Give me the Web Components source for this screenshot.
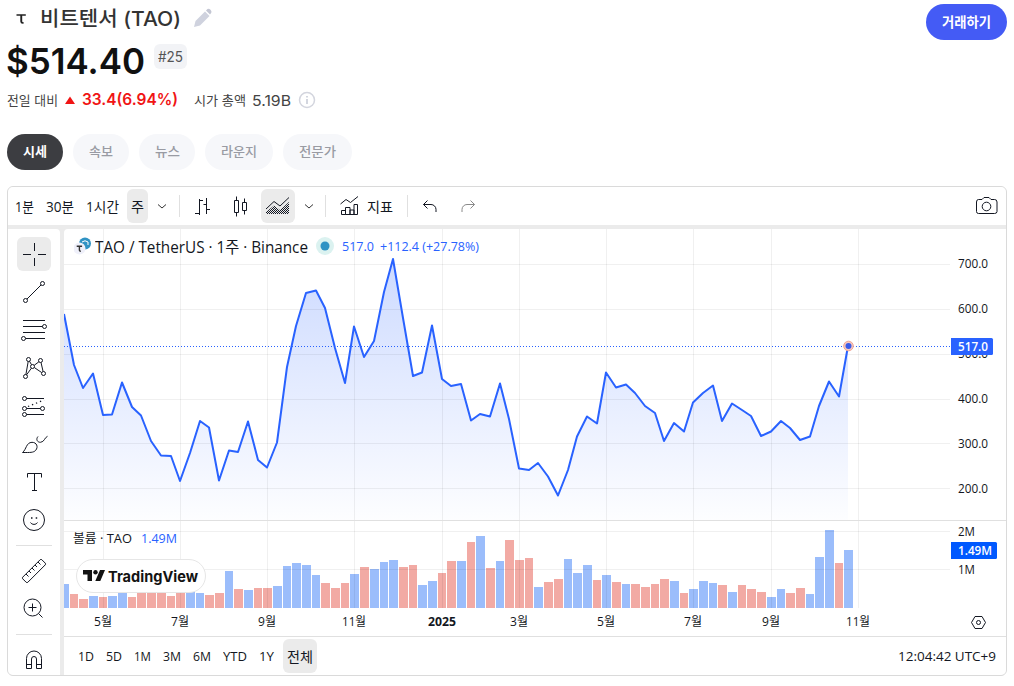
<!DOCTYPE html>
<html lang="ko">
<head>
<meta charset="utf-8">
<title>비트텐서 (TAO)</title>
<style>
    body {
        margin: 0;
        background: #fff;
        overflow: hidden;
        font-family: Inter, "Noto Sans CJK KR", sans-serif;
        color: #333;
    }
</style>
</head>
<body>
<coin-page></coin-page>

<script>
// text squeezed or stretched to the width given in "w"
class FitText extends HTMLElement {

    constructor() {
        super();
        this.shadow = this.attachShadow({mode: 'open'});
    }

    connectedCallback() {
        this.shadow.innerHTML =
        `
        <style>
            :host{
                display:block;
                flex:none;
                width:${this.getAttribute('w')}px;
                white-space:nowrap;
            }
            span{
                display:inline-block;
                transform-origin:0 50%;
            }
        </style>
        <span><slot></slot></span>
        `;
        const span = this.shadow.querySelector('span');
        const real = span.getBoundingClientRect().width;
        if (real > 0) {
            span.style.transform = `scaleX(${this.getAttribute('w') / real})`;
        }
    }
}

const ICONS = {
    cross: '<path d="M3 14.5h8M18 14.5h8M14.5 3v8M14.5 18v8"/>',
    trend: '<path d="M7 21L21 7"/><circle cx="5.5" cy="22.5" r="2"/><circle cx="22.5" cy="5.5" r="2"/>',
    fib: '<path d="M3 4.5h22M3 10.5h19.5M3 16.5h22M5.5 22.5H25"/><circle cx="24.5" cy="10.5" r="2"/><circle cx="3.5" cy="22.5" r="2"/>',
    pattern: '<path d="M5.9 20.5L8.2 7.5M9.5 7.2l2 3.5M14.2 11.3l4.7-3.5M21 8.5l2.1 9M14.4 13.6l7.2 4.9M11.4 14.2l-4.8 6.6"/><circle cx="8.5" cy="5.5" r="2"/><circle cx="20.5" cy="6.5" r="2"/><circle cx="12.5" cy="12.5" r="2"/><circle cx="5.5" cy="22.5" r="2"/><circle cx="23.5" cy="19.5" r="2"/>',
    forecast: '<path d="M6.5 6.5H24M6.5 16.5h14M6.5 22.5H24"/><path d="M8 14.5L24 8" stroke-width="1.3" stroke-dasharray="1.3 3"/><circle cx="4.5" cy="6.5" r="2"/><circle cx="4.5" cy="16.5" r="2"/><circle cx="22.5" cy="16.5" r="2"/><circle cx="4.5" cy="22.5" r="2"/>',
    brush: '<path d="M2.5 22.5C6.5 19.5 6 12.5 12 12.3C16.8 12.3 18.5 17 15.7 20.3C13.5 22.8 10 22.5 2.5 22.5z"/><path d="M27.5 6.3C24.5 7.5 24.5 12 20.5 12.3C17.5 12.4 15.5 9.5 18 6.5"/>',
    text: '<path d="M7.5 9.5v-4h14v4M14.5 5.5v17M12 22.5h5"/>',
    smile: '<circle cx="14" cy="14" r="10.5"/><path d="M10.5 16.5c1.5 2.5 5.5 2.5 7 0"/><path d="M11 12h1.5M15.7 12h1.5" stroke-width="1.6"/>',
    ruler: '<path d="M2.7 20.2L20.2 2.7q.8-.7 1.6 0l3.5 3.5q.7.8 0 1.6L7.8 25.3q-.8.7-1.6 0l-3.5-3.5q-.7-.8 0-1.6zM6 17l2.5 2.5M9 14l2 2M12 11l2.5 2.5M15 8l2 2M18 5l2.5 2.5"/>',
    zoom: '<circle cx="12.5" cy="12.5" r="8.5"/><path d="M18.5 18.5l4 4M8.5 12.5h8M12.5 8.5v8"/>',
    magnet: '<path d="M6.5 22.5V12.5a7.5 7.5 0 0 1 15 0v10h-5V13a2.5 2.5 0 0 0-5 0v9.5zM6.5 18.5h5M16.5 18.5h5"/>',
    chevron: '<path d="M10 12.5l4 3.5 4-3.5" stroke="#333"/>',
    bars: '<path d="M11.5 7v16M7 21.5h4.5M11.5 8.5H15M18.5 6v16M15.5 12.5h3M18.5 17.5H22"/>',
    candles: '<path d="M8.5 8.5h4v12h-4zM10.5 4.5v4M10.5 20.5v4M16.5 10.5h4v8h-4zM18.5 6.5v4M18.5 18.5v4"/>',
    area: '<defs><pattern id="h" width="2" height="2" patternUnits="userSpaceOnUse"><path d="M0 0h1v1H0zM1 1h1v1H1z" fill="#131722" stroke="none"/></pattern></defs><path d="M2 22v-2l8-6.5 6 4.5 9-8v12z" fill="url(#h)" stroke="none"/><path d="M2 17l8-7.5 6 4.5 9-8.5"/>',
    indicator: '<path d="M5.5 12l5.5-4.5 4.5 3L23 4.5M6.5 22.5v-4h4v4zM10.5 22.5v-7h4.5v7zM15 22.5V18h4v4.5zM19 22.5v-10h3.5v10z"/>',
    undo: '<path d="M11.5 8.5l-4 4 4 4M7.5 12.5H15a5 5 0 0 1 5 5V20"/>',
    redo: '<path d="M16.500 8.5l4 4-4 4M20.500 12.5H13a5 5 0 0 0-5 5V20" stroke="#8a8a8a"/>',
    camera: '<path d="M6.500 7.500h3.500l2-2h5l2 2H22.500q2.500 0 2.500 2.500v9.500q0 2-2.500 2h-16q-2 0-2-2V10q0-2.500 2-2.500z"/><circle cx="14.500" cy="14.500" r="4.300"/>'
};

class ToolIcon extends HTMLElement {

    constructor() {
        super();
        this.shadow = this.attachShadow({mode: 'open'});
    }

    connectedCallback() {
        this.shadow.innerHTML =
        `
        <style>
            :host{
                display:flex;
                flex:none;
                width:34px;
                height:34px;
                align-items:center;
                justify-content:center;
                border-radius:6px;
            }
            :host([active]){
                background:#ebebeb;
            }
            svg{
                width:28px;
                height:28px;
                flex:none;
                fill:none;
                stroke:#131722;
            }
        </style>
        <svg viewBox="0 0 28 28">${ICONS[this.getAttribute('name')]}</svg>
        `;
    }
}

class CoinHeader extends HTMLElement {

    constructor() {
        super();
        this.shadow = this.attachShadow({mode: 'open'});
        this.render();
    }

    render() {
        this.shadow.innerHTML =
        `
        <style>
            :host{
                display:flex;
                justify-content:space-between;
                align-items:flex-start;
                height:134px;
                padding:0 7px;
            }
            .row{
                display:flex;
                align-items:center;
            }
            .name{
                height:38px;
                font-size:20px;
                font-weight:500;
            }
            .name fit-text{
                margin:-4px 0 0 5px;
            }
            .price{
                height:46px;
                font-size:36px;
                font-weight:600;
                color:#111;
            }
            .rank{
                display:flex;
                align-items:center;
                justify-content:center;
                width:33px;
                height:25px;
                margin:-9px 0 0 9px;
                border-radius:6px;
                background:#f2f3f6;
                color:#555;
                font-size:14px;
                font-weight:400;
            }
            .rank fit-text{
                margin-top:-1px;
            }
            .stats{
                height:32px;
                font-size:13px;
                color:#444;
            }
            .stats fit-text{
                margin-top:-2px;
            }
            .up{
                font-size:16px;
                font-weight:600;
                color:#f01414;
            }
            .trade{
                display:flex;
                align-items:center;
                justify-content:center;
                width:81px;
                height:36px;
                margin-top:4px;
                border-radius:18px;
                background:#445bf5;
                color:#fff;
                font-size:14px;
                font-weight:700;
            }
            .trade fit-text{
                margin-top:-2px;
            }
        </style>
        <div>
            <div class="row name">
                <svg width="28" height="28" viewBox="0 0 28 28"><path d="M9.500 9.200h9.300v1.600h-3.600v5.500q0 1.200 1.500 1v1.300q-3.400.400-3.400-2.200v-5.600H9.500z" fill="#222"/></svg>
                <fit-text w="141">비트텐서 (TAO)</fit-text>
                <svg style="margin:-2px 0 0 12px" width="20" height="20" viewBox="0 0 20 20"><path d="M1 19l1.500-6L12 3.500l4.500 4.500L7 17.500z" fill="#cfd2de"/><path d="M13 2.500l1.500-1.500q1.500-.800 3 .800t.800 3L17 6.500z" fill="#c3c6d3"/></svg>
            </div>
            <div class="row price">
                <fit-text style="margin-left:-1px" w="139">$514.40</fit-text>
                <div class="rank"><fit-text w="25">#25</fit-text></div>
            </div>
            <div class="row stats">
                <fit-text w="51">전일 대비</fit-text>
                <svg style="margin-left:7px" width="10" height="8" viewBox="0 0 10 8"><path d="M5 .5L10 8H0z" fill="#f01414"/></svg>
                <fit-text class="up" style="margin-left:7px" w="96">33.4(6.94%)</fit-text>
                <fit-text style="margin-left:16px" w="52">시가 총액</fit-text>
                <fit-text style="margin:0 0 0 6px;font-size:15px" w="39">5.19B</fit-text>
                <svg style="margin-left:7px" width="18" height="18" viewBox="0 0 18 18"><circle cx="9" cy="9" r="7.500" fill="none" stroke="#d3d5de" stroke-width="1.500"/><path d="M9 8v5M9 5v1.600" stroke="#c9ccd8" stroke-width="1.600"/></svg>
            </div>
        </div>
        <div class="trade"><fit-text w="49">거래하기</fit-text></div>
        `;
    }
}

class CoinTabs extends HTMLElement {

    constructor() {
        super();
        this.shadow = this.attachShadow({mode: 'open'});
        this.render();
    }

    render() {
        this.shadow.innerHTML =
        `
        <style>
            :host{
                display:flex;
                gap:10px;
                padding-left:7px;
                font-size:13px;
                color:#999ba3;
            }
            div{
                display:flex;
                align-items:center;
                justify-content:center;
                width:56px;
                height:36px;
                border-radius:18px;
                background:#f6f7fa;
                font-weight:500;
            }
            div.on{
                background:#3c3d41;
                color:#fff;
                font-weight:700;
            }
            fit-text{
                margin-top:-3px;
            }
        </style>
        <div class="on"><fit-text w="24">시세</fit-text></div>
        <div><fit-text w="24">속보</fit-text></div>
        <div><fit-text w="25">뉴스</fit-text></div>
        <div style="width:68px"><fit-text w="36">라운지</fit-text></div>
        <div style="width:69px"><fit-text w="37">전문가</fit-text></div>
        `;
    }
}

class TopToolbar extends HTMLElement {

    constructor() {
        super();
        this.shadow = this.attachShadow({mode: 'open'});
        this.render();
    }

    render() {
        this.shadow.innerHTML =
        `
        <style>
            :host{
                display:flex;
                align-items:center;
                height:38px;
                background:#fff;
                font-size:14px;
            }
            .iv{
                display:flex;
                flex:none;
                align-items:center;
                justify-content:center;
                height:34px;
                border-radius:6px;
            }
            .on{
                background:#ebebeb;
            }
            .small{
                width:28px;
            }
            i{
                flex:none;
                width:1px;
                height:22px;
                background:#e0e0e0;
            }
        </style>
        <div class="iv" style="width:32px"><fit-text w="19">1분</fit-text></div>
        <div class="iv" style="width:39px"><fit-text w="28">30분</fit-text></div>
        <div class="iv" style="width:46px"><fit-text w="33">1시간</fit-text></div>
        <div class="iv on" style="width:21px;margin-left:2px"><fit-text w="13">주</fit-text></div>
        <tool-icon class="small" name="chevron"></tool-icon>
        <i style="margin:0 5px 0 3px"></i>
        <tool-icon name="bars"></tool-icon>
        <tool-icon name="candles" style="margin:0 4px"></tool-icon>
        <tool-icon name="area" active></tool-icon>
        <tool-icon class="small" name="chevron"></tool-icon>
        <i style="margin:0 9px 0 2px"></i>
        <tool-icon class="small" name="indicator"></tool-icon>
        <fit-text style="margin:-1px 0 0 4px" w="26">지표</fit-text>
        <i style="margin:0 5px 0 14px"></i>
        <tool-icon name="undo"></tool-icon>
        <tool-icon name="redo" style="margin-left:4px"></tool-icon>
        <tool-icon class="small" name="camera" style="margin:0 6px 0 auto"></tool-icon>
        `;
    }
}

class DrawToolbar extends HTMLElement {

    constructor() {
        super();
        this.shadow = this.attachShadow({mode: 'open'});
        this.render();
    }

    render() {
        const icon = (name) => `<tool-icon name="${name}" ${name == 'cross' ? 'active' : ''}></tool-icon>`;

        this.shadow.innerHTML =
        `
        <style>
            :host{
                display:flex;
                flex-direction:column;
                align-items:center;
                flex:none;
                gap:4px;
                width:52px;
                box-sizing:border-box;
                padding-top:8px;
                overflow:hidden;
                background:#fff;
                border-top-right-radius:4px;
            }
            i{
                flex:none;
                width:36px;
                height:1px;
                margin:4px 0;
                background:#e0e0e0;
            }
        </style>
        ${['cross', 'trend', 'fib', 'pattern', 'forecast', 'brush', 'text', 'smile'].map(icon).join('')}
        <i></i>
        ${['ruler', 'zoom'].map(icon).join('')}
        <i></i>
        ${icon('magnet')}
        `;
    }
}

// weekly candles: x, y of the close, y of the volume bar top, 1 when the week closed up
const WEEKS = [
    [64,314,584,1],[74,365,594,0],[83,388,599,0],[93,373.5,596,1],[103,415,597,0],[112,414.5,596,1],
    [122,382.5,593,1],[132,407,597,0],[141,415.5,593,0],[151,441,593,0],[161,455.5,593,0],[171,456,596,0],
    [180,481,593,0],[190,453,592,1],[200,421,593,1],[209,427.5,595,0],[219,480.5,593,0],[229,450.5,571,1],
    [238,452,589,0],[248,421.5,590,1],[258,460,588,0],[267,467.5,588,0],[277,442.5,586,1],[287,367,566,1],
    [296,326,563,1],[306,293,565,1],[316,290.5,575,1],[325,308,583,0],[335,348,588,0],[345,383,583,0],
    [354,326.5,574,1],[364,357,567,0],[374,341,569,1],[384,292,562,1],[393,259,560,1],[403,318,567,0],
    [413,376,565,0],[422,372.5,585,1],[432,325.5,581,1],[442,379,573,0],[451,386,561,0],[461,384,561,1],
    [471,420.5,542,0],[480,414,536,1],[490,416.5,568,0],[500,383.5,561,1],[509,419,540,0],[519,468.5,560,0],
    [529,470,558,0],[538,463,587,1],[548,476.5,582,0],[558,495.5,579,0],[568,470,559,1],[577,436.5,573,1],
    [587,416.5,565,1],[597,423.5,580,0],[606,372.5,575,1],[616,387.5,582,0],[626,384.5,584,1],[635,393,584,0],
    [645,406,587,0],[655,413,584,0],[664,441,579,0],[674,423,581,1],[684,431.5,593,0],[693,402.5,589,1],
    [703,393,581,1],[713,385.5,583,1],[722,421,585,0],[732,403.5,592,1],[742,410,585,0],[751,416,589,0],
    [761,436,592,0],[771,431.5,597,1],[781,421,589,1],[790,428,593,0],[800,440,588,0],[810,436.5,594,1],
    [819,406,557,1],[829,381.5,530,1],[839,396.5,563,0],[848,346,550,1]
];
const MONTHS = [
    [103,'5월',18],[180,'7월',18],[267,'9월',18],[354,'11월',24],[442,'2025',28],
    [519,'3월',18],[606,'5월',18],[693,'7월',18],[771,'9월',18],[858,'11월',24]
];
const PRICES = [[264,'700.0'],[309,'600.0'],[354,'500.0'],[399,'400.0'],[443,'300.0'],[488,'200.0']];

class PriceChart extends HTMLElement {

    constructor() {
        super();
        this.shadow = this.attachShadow({mode: 'open'});
        this.render();
    }

    render() {
        const points = WEEKS.map(w => `${w[0]},${w[1]}`).join(' ');
        // one pixel stays free between neighbouring bars
        const bars = WEEKS.map((w, i) => {
            const next = WEEKS[i + 1] ? WEEKS[i + 1][0] : w[0] + 10;
            return `<rect x="${w[0] - 4}" y="${w[2]}" width="${next - w[0] - 1}" height="${608 - w[2]}" fill="${w[3] ? '#9bbdfb' : '#f2aaa4'}"/>`;
        }).join('');
        const grid = MONTHS.map(m => `M${m[0] + .5} 229V608`).join('')
            + PRICES.map(p => `M64 ${p[0] + .5}H950`).join('') + 'M64 531.5H950M64 569.5H950';
        const months = MONTHS.map(m => `<text x="${m[0] - m[2] / 2}" y="626" textLength="${m[2]}" lengthAdjust="spacingAndGlyphs" ${m[1] == '2025' ? 'font-weight="700"' : ''}>${m[1]}</text>`).join('');
        const prices = PRICES.map(p => `<text x="958" y="${p[0] + (p[0] > 400 ? 5 : 4)}" textLength="30" lengthAdjust="spacingAndGlyphs">${p[1]}</text>`).join('');

        this.shadow.innerHTML =
        `
        <style>
            :host{
                display:block;
                position:relative;
                height:407px;
                background:#fff;
                border-top-left-radius:4px;
                overflow:hidden;
            }
            svg{
                display:block;
            }
            .legend{
                position:absolute;
                display:flex;
                align-items:center;
                height:20px;
            }
            .main{
                left:11px;
                top:7px;
                font-size:16px;
                color:#131722;
            }
            .volume{
                left:9px;
                top:299px;
                font-size:12px;
            }
            .blue{
                color:#2962ff;
                font-size:13px;
            }
            .logo{
                position:absolute;
                left:12px;
                top:330px;
                display:flex;
                align-items:center;
                gap:4px;
                width:130px;
                height:34px;
                box-sizing:border-box;
                padding-left:6px;
                border:1px solid #e6e6e6;
                border-radius:17px;
                background:#fff;
                color:#131313;
                font:700 15px Inter, sans-serif;
            }
        </style>
        <svg width="942" height="407" viewBox="64 229 942 407" font-size="12" fill="#131722">
            <defs>
                <linearGradient id="fade" gradientUnits="userSpaceOnUse" x1="0" y1="229" x2="0" y2="520">
                    <stop offset="0" stop-color="#2962ff" stop-opacity=".26"/>
                    <stop offset="1" stop-color="#2962ff" stop-opacity=".01"/>
                </linearGradient>
            </defs>
            <polygon points="64,520 ${points} 848,520" fill="url(#fade)"/>
            ${bars}
            <path d="${grid}" stroke="#000" stroke-opacity=".06"/>
            <path d="M64 520.5H1006" stroke="#e0e0e0"/>
            <path d="M64 346.5H950" stroke="#2962ff" stroke-dasharray="1 2"/>
            <polyline points="${points}" fill="none" stroke="#2962ff" stroke-width="2" stroke-linejoin="round"/>
            <circle cx="848.5" cy="346" r="4.800" fill="#f7c9c0" stroke="#f0a595"/>
            <circle cx="848.5" cy="346" r="3" fill="#3a5be8"/>
            ${prices}
            <text x="958" y="536" textLength="17" lengthAdjust="spacingAndGlyphs">2M</text>
            <text x="958" y="574" textLength="17" lengthAdjust="spacingAndGlyphs">1M</text>
            <path d="M951 338h40.500q1.500 0 1.500 1.500v14q0 1.500-1.500 1.500H951z" fill="#2962ff"/>
            <path d="M951 542h44.500q1.500 0 1.500 1.500v14q0 1.500-1.500 1.500H951z" fill="#0059ff"/>
            <g fill="#fff" font-weight="600">
                <text x="958" y="351" textLength="30" lengthAdjust="spacingAndGlyphs">517.0</text>
                <text x="958" y="555" textLength="34" lengthAdjust="spacingAndGlyphs">1.49M</text>
            </g>
            ${months}
            <g fill="none" stroke="#131722">
                <path d="M975 616.500h7l3.500 6-3.500 6h-7l-3.500-6z"/>
                <circle cx="978.500" cy="622.500" r="2"/>
            </g>
        </svg>
        <div class="legend main">
            <svg style="margin-left:-1px" width="18" height="18" viewBox="0 0 18 18"><circle cx="11" cy="6.500" r="6" fill="#3093c4"/><path d="M8 5q3-2.500 6 0v3" fill="none" stroke="#fff"/><circle cx="5.500" cy="11.500" r="6" fill="#eff0fa"/><path d="M2.700 9.200h5.400M5.400 9.200v4q0 1 1.500 1" fill="none" stroke="#333" stroke-width="1.400"/></svg>
            <fit-text style="margin-left:3px" w="213">TAO / TetherUS · 1주 · Binance</fit-text>
            <svg style="margin-left:8px" width="18" height="18"><circle cx="9" cy="9" r="9" fill="#dbf2f0"/><circle cx="9" cy="9" r="4.500" fill="#3093c4"/></svg>
            <fit-text class="blue" style="margin-left:8px" w="32">517.0</fit-text>
            <fit-text class="blue" style="margin-left:6px" w="99">+112.4 (+27.78%)</fit-text>
        </div>
        <div class="legend volume">
            <fit-text w="59">볼륨 · TAO</fit-text>
            <fit-text class="blue" style="margin-left:9px" w="36">1.49M</fit-text>
        </div>
        <div class="logo">
            <svg width="22" height="12" viewBox="0 0 22 12" fill="#131313"><path d="M0 0h9v11H4.500V4.500H0zM17 0h5l-4.700 11h-5z"/><circle cx="12.500" cy="2.200" r="2.200"/></svg>
            <fit-text style="margin-left:-1px" w="90">TradingView</fit-text>
        </div>
        `;
    }
}

class RangeBar extends HTMLElement {

    constructor() {
        super();
        this.shadow = this.attachShadow({mode: 'open'});
        this.render();
    }

    render() {
        this.shadow.innerHTML =
        `
        <style>
            :host{
                display:flex;
                align-items:center;
                gap:12px;
                height:39px;
                box-sizing:border-box;
                padding:0 10px 0 14px;
                border-top:1px solid #e0e0e0;
                background:#fff;
                font-size:13px;
            }
            .on{
                display:flex;
                align-items:center;
                justify-content:center;
                width:34px;
                height:34px;
                margin-left:-3px;
                border-radius:6px;
                background:#ebebeb;
                font-size:14px;
            }
            .clock{
                margin-left:auto;
            }
        </style>
        <fit-text w="16">1D</fit-text>
        <fit-text w="16">5D</fit-text>
        <fit-text w="17">1M</fit-text>
        <fit-text w="18">3M</fit-text>
        <fit-text w="18">6M</fit-text>
        <fit-text w="24">YTD</fit-text>
        <fit-text w="15">1Y</fit-text>
        <div class="on"><fit-text w="26">전체</fit-text></div>
        <fit-text class="clock" w="98">12:04:42 UTC+9</fit-text>
        `;
    }
}

class ChartWidget extends HTMLElement {

    constructor() {
        super();
        this.shadow = this.attachShadow({mode: 'open'});
        this.render();
    }

    render() {
        this.shadow.innerHTML =
        `
        <style>
            :host{
                display:flex;
                flex-direction:column;
                gap:4px;
                width:998px;
                height:488px;
                margin:16px 0 0 7px;
                border:1px solid #dadada;
                border-radius:6px;
                overflow:hidden;
                background:#ebebeb;
                color:#131722;
                font-family:"Open Sans", "Noto Sans CJK KR", sans-serif;
            }
            .body{
                display:flex;
                gap:4px;
                flex:1;
                min-height:0;
            }
            .pane{
                flex:1;
            }
        </style>
        <top-toolbar></top-toolbar>
        <div class="body">
            <draw-toolbar></draw-toolbar>
            <div class="pane">
                <price-chart></price-chart>
                <range-bar></range-bar>
            </div>
        </div>
        `;
    }
}

class CoinPage extends HTMLElement {

    constructor() {
        super();
        this.shadow = this.attachShadow({mode: 'open'});
        this.shadow.innerHTML =
        `
        <style>
            :host{
                display:block;
                width:1014px;
                height:686px;
            }
        </style>
        <coin-header></coin-header>
        <coin-tabs></coin-tabs>
        <chart-widget></chart-widget>
        `;
    }
}

customElements.define('fit-text', FitText);
customElements.define('tool-icon', ToolIcon);
customElements.define('coin-header', CoinHeader);
customElements.define('coin-tabs', CoinTabs);
customElements.define('top-toolbar', TopToolbar);
customElements.define('draw-toolbar', DrawToolbar);
customElements.define('price-chart', PriceChart);
customElements.define('range-bar', RangeBar);
customElements.define('chart-widget', ChartWidget);
customElements.define('coin-page', CoinPage);
</script>
</body>
</html>
